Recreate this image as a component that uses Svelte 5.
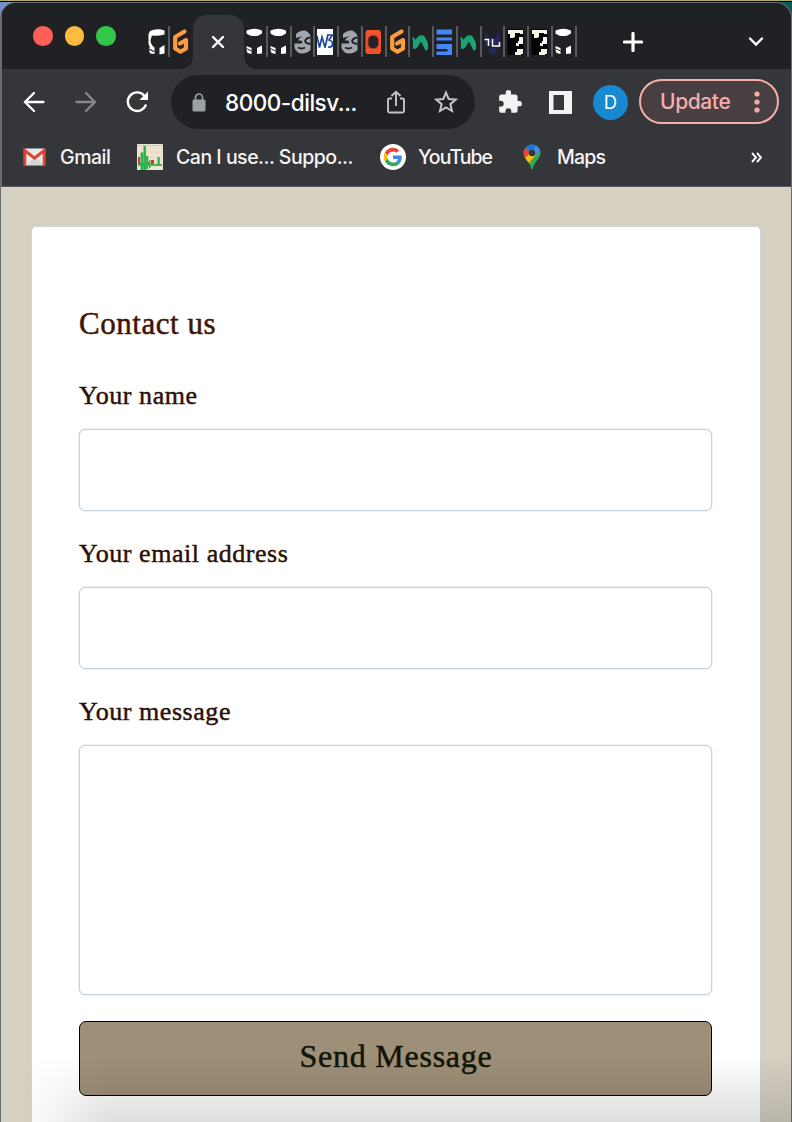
<script>
  const leading = ['cat-outline', 'gitpod'];
  const trailing = ['cat', 'cat', 'globe', 'w3', 'globe', 'red', 'gitpod', 'peak', 'doc', 'peak', 'devil', 'pixel', 'pixel', 'cat'];
  const fields = [
    { label: 'Your name', id: 'name', kind: 'input' },
    { label: 'Your email address', id: 'email', kind: 'input' },
    { label: 'Your message', id: 'message', kind: 'textarea' }
  ];
</script>

{#snippet favicon(kind)}
  <svg class="fav" viewBox="0 0 17 28" width="17" height="28" aria-hidden="true">
    {#if kind === 'cat-outline'}
      <path d="M2 3Q9 0 16.500 2.500V6.500Q9 8.500 4 7.500L2.500 12Q2.500 17 6.500 19.500V26L2 25.500L.5 20L2 19.500L.5 16V6Z" fill="#fff"/>
      <path d="M0 20.500l6 3" stroke="#202124" stroke-width="1.200"/>
      <path d="M11.500 20l5-3v8.500l-5 1Z" fill="#fff"/>
    {:else if kind === 'cat'}
      <path d="M.5 2.500Q8.500-1 16 2.500V5.500Q14 6.500 12.500 7.500Q8.500 8.500 4 7.500Q2 6.500.5 5.500Z" fill="#fff"/>
      <path d="M.5 18l5 2v6L1.500 25l-1-3ZM11 20l5-2.500v8l-5 .5Z" fill="#fff"/>
      <path d="M0 20.500l5.500 2.500" stroke="#202124"/>
    {:else if kind === 'gitpod'}
      <path d="M12.500 3.500L3.200 9V20.500L8.500 23.700 14 20.500V12L8 15.500" fill="none" stroke="#ff9b3f" stroke-width="4.200" stroke-linejoin="round" stroke-linecap="round"/>
    {:else if kind === 'globe'}
      <path d="M2 6Q6 2 11 2.500Q16.500 5 16.500 9v13Q13 25.500 8 25.500Q3 25.500 .5 20v-4.500h7q2-2-1-3H4Q5 9.500 9 8.500Q5 8.500 2 10Z" fill="#a0a6ad"/>
      <path d="M16.500 9.500q-4.500.5-5.500 3.500 1.500 3.500 5.500 2.500M4 19.500q3.500 2 7 0" fill="none" stroke="#202124" stroke-width="1.900"/>
    {:else if kind === 'w3'}
      <rect y="1" width="16" height="26" fill="#fff"/>
      <path d="M0 8l2.500 11.500L5 9l3 10.500L11 6.500M10 7h5.500l-3.500 5q4 1 3.500 4.500-.5 3-4.500 2.500" fill="none" stroke="#17479e" stroke-width="1.700"/>
    {:else if kind === 'red'}
      <path d="M2 2h12.500L16 4v20l-1.500 2H2L.5 24V4Z" fill="#f4512c"/>
      <rect x="3" y="7.500" width="10.500" height="13" rx="4.500" fill="#282124" stroke="#a93a24"/>
    {:else if kind === 'peak'}
      <path d="M.5 8.500L3.500 11.500 7 7.500H12L16 15V21.500L13.500 22.500 9 13.500 4.500 20.500 1 21Z" fill="#1aa374"/>
    {:else if kind === 'doc'}
      <path d="M.5 1.500h15.500v5H.5ZM.5 9.500h15.500v3H.5ZM.5 16h15.500v11H.5v-3.500h11v-2.500H.5Z" fill="#4387f5"/>
    {:else if kind === 'devil'}
      <path d="M1 3l4 7h6l4-7 1 14-3 3-2 6H6l-2-6-3-3Z" fill="#25265b"/>
      <path d="M4 15v5h8v-3Z" fill="#202124"/>
      <path d="M.5 11.500h4v6.500M8.500 11v7h7v-4" fill="none" stroke="#fff" stroke-width="1.500"/>
    {:else}
      <rect x=".5" y="1" width="16" height="26" fill="#050505"/>
      <path d="M1 2h15v4h-3V5H8v4L6 10H3V6H1ZM12 9h4v7h-4v2H9v-3h2v-2h1ZM8 27v-3h2v-3h6v5h-2v1Z" fill="#f8f5eb"/>
    {/if}
  </svg>
{/snippet}

<div class="desktop">
  <div class="window">
    <header>
      <div class="tabs">
        <div class="lights"><i class="red"></i><i class="yellow"></i><i class="green"></i></div>
        <div class="group">
          {#each leading as kind, i}
            <span class="slot" class:last={i === 1}>{@render favicon(kind)}</span>
          {/each}
        </div>
        <div class="active">
          <svg width="14" height="14" viewBox="0 0 14 14"><path d="M2 2l10 10m0-10l-10 10" stroke="#fff" stroke-width="2.400" stroke-linecap="round"/></svg>
        </div>
        <div class="group rest">
          {#each trailing as kind}
            <span class="slot">{@render favicon(kind)}</span>
          {/each}
        </div>
        <svg class="plus" width="20" height="20" viewBox="0 0 20 20"><path d="M10 1.500v17M1.500 10h17" stroke="#fff" stroke-width="3.200" stroke-linecap="round"/></svg>
        <svg class="chev" width="16" height="12" viewBox="0 0 16 12"><path d="M2 2.500l6 6 6-6" fill="none" stroke="#fff" stroke-width="2.400" stroke-linecap="round"/></svg>
      </div>

      <div class="toolbar">
        <svg class="back" width="22" height="22" viewBox="0 0 22 22"><path d="M20.500 11H2M11 2L2 11l9 9" fill="none" stroke="#fff" stroke-width="2.300" stroke-linecap="round"/></svg>
        <svg class="fwd" width="22" height="22" viewBox="0 0 22 22"><path d="M1.500 11H20M11 2l9 9-9 9" fill="none" stroke="#87888a" stroke-width="2.300" stroke-linecap="round"/></svg>
        <svg class="reload" width="24" height="24" viewBox="0 0 24 24"><path d="M21 14.500A9.300 9.300 0 1 1 19.500 6" fill="none" stroke="#fff" stroke-width="2.400"/><path d="M23 1.500V10h-8.500Z" fill="#fff"/></svg>
        <div class="omnibox">
          <svg width="14" height="19" viewBox="0 0 14 19"><path d="M3.500 8V4.500a3.500 3.500 0 0 1 7 0V8" fill="none" stroke="#9aa0a6" stroke-width="1.700"/><rect x=".5" y="6.500" width="13" height="12" rx="1.500" fill="#9aa0a6"/></svg>
          <span class="url">8000-dilsv...</span>
          <svg class="share" width="20" height="24" viewBox="0 0 20 24"><path d="M6 8.500H3.500Q2 8.500 2 10v11q0 1.500 1.500 1.500h13Q18 22.500 18 21V10q0-1.500-1.500-1.500H14M10 16V2M5.500 6L10 1.700 14.500 6" fill="none" stroke="#c3c5c8" stroke-width="1.900"/></svg>
          <svg class="star" width="24" height="24" viewBox="0 0 24 24"><path d="M12 2.600l2.700 6.400 7 .6-5.300 4.600 1.600 6.800-6-3.600L6 21l1.600-6.800L2.300 9.600l7-.6Z" fill="none" stroke="#c3c5c8" stroke-width="2"/></svg>
        </div>
        <svg class="puzzle" width="26" height="26" viewBox="0 0 24 24"><path d="M20.500 11H19V7c0-1.100-.9-2-2-2h-4V3.500a2.500 2.500 0 0 0-5 0V5H4c-1.100 0-2 .9-2 2v3.800h1.500a2.700 2.700 0 0 1 0 5.400H2V20c0 1.100.9 2 2 2h3.800v-1.500a2.700 2.700 0 0 1 5.400 0V22H17c1.100 0 2-.9 2-2v-4h1.500a2.500 2.500 0 0 0 0-5Z" fill="#f1f3f4"/></svg>
        <svg class="panel" width="23" height="23" viewBox="0 0 23 23"><path fill-rule="evenodd" d="M0 0h23v23H0ZM4.500 4v15H15V4Z" fill="#f1f3f4"/></svg>
        <div class="avatar">D</div>
        <div class="update"><span>Update</span><svg width="6" height="22" viewBox="0 0 6 22"><g fill="#f6aea9"><circle cx="3" cy="3" r="2.600"/><circle cx="3" cy="11" r="2.600"/><circle cx="3" cy="19" r="2.600"/></g></svg></div>
      </div>

      <div class="bookmarks">
        <svg class="b1" width="23" height="18" viewBox="0 0 23 18"><rect x="1" y=".5" width="21" height="17" rx="1.500" fill="#e7e7e7"/><path d="M3 17l8.500-8 8.500 8" fill="#d5d5d5"/><path d="M1.800 17.500V2.500l9.700 7.700 9.700-7.700v15" fill="none" stroke="#dc4437" stroke-width="3"/></svg>
        <span class="t1">Gmail</span>
        <svg class="b2" width="26" height="26" viewBox="0 0 26 26"><rect width="26" height="26" fill="#eee4d2"/><path d="M0 1.500h26" stroke="#bdb5a8" stroke-dasharray="2 1"/><path d="M5 3v17M10 3v17M15 3v17M20 3v17M0 8h26M0 14h26" stroke="#ddd4c4" stroke-width=".6"/><path d="M1 13h2v6h-2ZM10 18h2v2h2v-4h3v4h8v1.500H1V19h9Z" fill="#d3392f"/><path d="M3.500 8.500h2.800V26H3.500ZM6.500 2h2.500v24H6.500ZM9 12h2.300v13H9ZM12 16h1.500v8h-1.500ZM20.500 13h2.300v9h-2.300ZM1 20h24v1.500H1Z" fill="#31b44b"/></svg>
        <span class="t2">Can I use... Suppo...</span>
        <svg class="b3" width="26" height="26" viewBox="0 0 26 26"><circle cx="13" cy="13" r="13" fill="#fff"/><g transform="translate(3.800 3.800) scale(.383)"><path fill="#EA4335" d="M24 9.500c3.540 0 6.710 1.220 9.210 3.600l6.850-6.850C35.900 2.380 30.470 0 24 0 14.620 0 6.510 5.380 2.560 13.220l7.980 6.190C12.430 13.720 17.740 9.500 24 9.500z"/><path fill="#4285F4" d="M46.980 24.550c0-1.570-.15-3.090-.38-4.550H24v9.020h12.940c-.58 2.960-2.260 5.480-4.780 7.180l7.730 6c4.510-4.180 7.090-10.360 7.090-17.650z"/><path fill="#FBBC05" d="M10.530 28.590a14.500 14.500 0 0 1 0-9.180l-7.980-6.190a24 24 0 0 0 0 21.560l7.980-6.190z"/><path fill="#34A853" d="M24 48c6.480 0 11.930-2.130 15.890-5.810l-7.730-6c-2.150 1.450-4.920 2.300-8.160 2.300-6.260 0-11.570-4.220-13.470-9.910l-7.980 6.190C6.510 42.620 14.620 48 24 48z"/></g></svg>
        <span class="t3">YouTube</span>
        <svg class="b4" width="18" height="26" viewBox="0 0 18 26"><defs><clipPath id="pin"><path d="M9 .5a8.500 8.500 0 0 1 8.500 8.500c0 6-6.500 8.500-7.600 15.500q-.9 2-1.800 0C7 17.500.5 15 .5 9A8.500 8.500 0 0 1 9 .5Z"/></clipPath></defs><g clip-path="url(#pin)"><path d="M0 0h18v26H0Z" fill="#34a853"/><path d="M0 2l9 7-7 8-2-2Z" fill="#ea4335"/><path d="M1 15l6-6 6 2-8.500 9.500Z" fill="#fbbc04"/><path d="M2 3l5 5 8-8H4Z" fill="#1a73e8"/><path d="M10 7l4-7 4 5-7 8Z" fill="#4285f4"/></g><circle cx="9" cy="9" r="3.200" fill="#35363a"/></svg>
        <span class="t4">Maps</span>
        <svg class="more" width="11" height="11" viewBox="0 0 11 11"><path d="M1 1l4 4.500-4 4.500M6 1l4 4.500-4 4.500" fill="none" stroke="#fff" stroke-width="1.900"/></svg>
      </div>
    </header>

    <main>
      <form class="card">
        <h1>Contact us</h1>
        {#each fields as f}
          <label for={f.id}>{f.label}</label>
          {#if f.kind === 'input'}
            <input id={f.id} type="text" />
          {:else}
            <textarea id={f.id}></textarea>
          {/if}
        {/each}
        <button type="button">Send Message</button>
      </form>
    </main>
  </div>
  <div class="shade"></div>
</div>

<style>
  :global(body) { background: #d6d0c3; }
  * { box-sizing: border-box; }
  svg { display: block; flex: none; }
  .desktop { position: relative; width: 792px; height: 1122px; overflow: hidden; padding-top: 2px; background: linear-gradient(#b4ae67 0 1px, #000 1px 2px, transparent 2px), linear-gradient(90deg, #7590ce 0 50%, #075b56 50%); font-family: Inter, "Liberation Sans", sans-serif; }
  .window { height: 1120px; border: 1px solid #6b6c6e; border-bottom: 0; border-radius: 16px 16px 0 0; overflow: hidden; background: #d6d0c3; }
  header { height: 184px; background: #35363a; border-bottom: 1px solid #57585f; border-left: 1px solid #6b6c6e; }
  .tabs { height: 66px; background: #202124; display: flex; align-items: flex-start; }
  .lights { display: flex; gap: 12px; padding: 23px 0 0 31px; width: 144px; flex: none; }
  .lights i { width: 19.500px; height: 19.500px; border-radius: 50%; }
  .red { background: #ff5f57; }
  .yellow { background: #ffbb3f; }
  .green { background: #32c748; }
  .group { display: flex; padding-top: 23px; flex: none; width: 47px; }
  .slot { width: 23.75px; height: 31px; flex: none; display: flex; align-items: center; padding-left: 2px; border-right: 2px solid #58595c; }
  .slot.last { border-color: transparent; }
  .active { position: relative; width: 51px; height: 54px; margin-top: 12px; border-radius: 14px 14px 0 0; background: #35363a; flex: none; display: flex; justify-content: center; padding: 20px 1px 0 0; }
  .active::before, .active::after { content: ""; position: absolute; bottom: 0; width: 12px; height: 12px; }
  .active::before { right: 100%; background: radial-gradient(circle at 0 0, #202124 11.500px, #35363a 12px); }
  .active::after { left: 100%; background: radial-gradient(circle at 100% 0, #202124 11.500px, #35363a 12px); }
  .rest { width: 333px; }
  .plus { margin: 29px 0 0 46px; }
  .chev { margin: 33px 0 0 105px; }
  .toolbar { height: 66px; display: flex; align-items: center; }
  .back { margin-left: 21px; }
  .fwd { margin-left: 30px; }
  .reload { margin-left: 28px; }
  .omnibox { margin-left: 22px; width: 304px; height: 54px; border-radius: 27px; background: #202124; display: flex; align-items: center; padding-left: 21px; flex: none; }
  .url { margin-left: 19px; width: 142px; font-size: 22.500px; font-weight: 450; color: #fff; white-space: nowrap; letter-spacing: -.47px; }
  .share { margin-left: 19px; }
  .star { margin-left: 28px; }
  .puzzle { margin-left: 22px; }
  .panel { margin-left: 26px; }
  .avatar { margin-left: 21px; width: 35px; height: 35px; border-radius: 50%; background: #1789d1; color: #fff; display: flex; align-items: center; justify-content: center; font-size: 18.500px; flex: none; }
  .update { margin: 0 0 1px 11px; width: 140px; height: 45px; border-radius: 23px; border: 2px solid #f6aea9; background: #483f43; color: #f6aea9; display: flex; align-items: center; justify-content: space-between; padding: 0 17px 0 19px; font-size: 21px; font-weight: 450; letter-spacing: -.4px; flex: none; }
  .bookmarks { height: 44px; display: flex; align-items: center; color: #f4f4f4; font-size: 19.500px; font-weight: 450; letter-spacing: -.45px; white-space: nowrap; }
  .bookmarks span { flex: none; }
  .b1 { margin-left: 21px; }
  .t1 { margin-left: 14px; width: 51px; }
  .b2 { margin-left: 26px; }
  .t2 { margin-left: 13px; width: 178px; letter-spacing: -.49px; }
  .b3 { margin-left: 26px; }
  .t3 { margin-left: 12px; width: 75px; letter-spacing: -1px; }
  .b4 { margin-left: 30px; }
  .t4 { margin-left: 16px; letter-spacing: -.8px; }
  .more { margin: 0 29px 0 auto; }
  main { padding: 39px 30px 0; font-family: "Liberation Serif", serif; }
  .card { height: 930px; background: #fff; border: 1px solid #cdd4dc; border-radius: 5px; padding: 79px 48px 0 47px; display: flex; flex-direction: column; }
  h1 { margin: 0 0 36px; height: 36px; line-height: 36px; font-size: 31px; font-weight: 400; color: #401505; letter-spacing: .55px; -webkit-text-stroke: .5px #401505; }
  label { height: 36px; line-height: 36px; margin-bottom: 15px; font-size: 26px; color: #2c1006; letter-spacing: .55px; -webkit-text-stroke: .45px #2c1006; }
  input { display: block; width: 100%; height: 82px; margin: 0 0 25px; border: 1.500px solid #c8d0d8; border-radius: 6px; background: #fff; outline: 0; box-shadow: 0 0 0 .5px #e1e5e9; }
  textarea { display: block; width: 100%; height: 250px; margin: 0 0 26px; border: 1.500px solid #c8d0d8; border-radius: 6px; background: #fff; resize: none; outline: 0; box-shadow: 0 0 0 .5px #e1e5e9; }
  button { height: 75px; border: 1.500px solid #000; border-radius: 7px; background: #9e8f78; color: #101505; font: 32px "Liberation Serif", serif; letter-spacing: .75px; -webkit-text-stroke: .5px #101505; padding: 0 0 5px 1px; flex: none; }
  .shade { position: absolute; left: 0; right: 0; bottom: 0; height: 66px; background: linear-gradient(transparent, rgba(0, 0, 0, .13)); -webkit-mask-image: linear-gradient(90deg, transparent 20px, #000 110px); mask-image: linear-gradient(90deg, transparent 20px, #000 110px); pointer-events: none; }
</style>
